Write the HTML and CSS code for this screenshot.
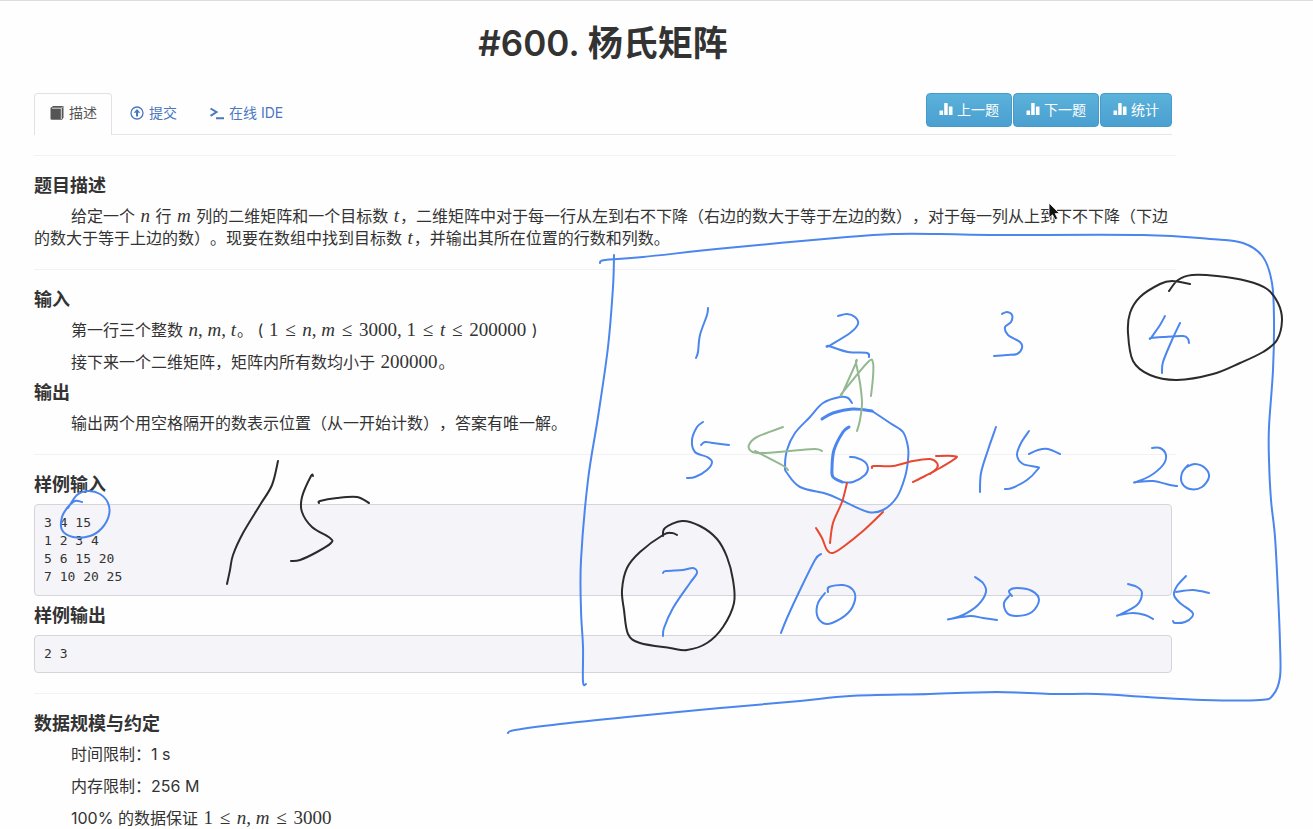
FILE: index.html
```
<!DOCTYPE html>
<html lang="zh-CN">
<head>
<meta charset="utf-8">
<title>#600. 杨氏矩阵</title>
<link rel="stylesheet" href="styles.css">
</head>
<body>
<svg class="symbols" aria-hidden="true">
  <symbol id="bars" viewBox="0 0 14 14"><path fill="currentColor" d="M1 8.500h2.600a.5.5 0 0 1 .5.5v4H.5V9a.5.5 0 0 1 .5-.5zM5.800 1h2.400a.5.5 0 0 1 .5.5V13H5.200V1.500a.5.5 0 0 1 .6-.5zM10.400 4.500H13a.5.5 0 0 1 .5.5v8H9.900V5a.5.5 0 0 1 .5-.5z"/></symbol>
</svg>
<main class="page">
  <h1 class="title">#600. 杨氏矩阵</h1>
  <div class="toolbar">
    <nav class="tabs">
      <a class="tab active" href="#desc"><svg class="icon" viewBox="0 0 14 14"><path fill="currentColor" d="M3 0h10.500v11.500l-1.500 2.300H1.800Q.5 13.800.5 12.500V2z"/><path fill="none" stroke="#fff" stroke-width=".8" d="M2 2.200h9.300V13M11.500 2.200l1.200-1.500"/></svg>描述</a>
      <a class="tab" href="#submit"><svg class="icon" viewBox="0 0 14 14"><circle cx="7" cy="7" r="6" fill="none" stroke="currentColor" stroke-width="1.300"/><path fill="currentColor" d="M7 3l3.300 3.700H8V10.500H6V6.700H3.700z"/></svg>提交</a>
      <a class="tab" href="#ide"><svg class="icon" viewBox="0 0 14 14"><path fill="none" stroke="currentColor" stroke-width="2" d="M.5 2.500L6.500 6 .5 9.800M6 12.300h8.500"/></svg>在线 IDE</a>
    </nav>
    <div class="actions">
      <button class="btn" type="button"><svg class="icon" viewBox="0 0 14 14"><use href="#bars"/></svg>上一题</button>
      <button class="btn" type="button"><svg class="icon" viewBox="0 0 14 14"><use href="#bars"/></svg>下一题</button>
      <button class="btn" type="button"><svg class="icon" viewBox="0 0 14 14"><use href="#bars"/></svg>统计</button>
    </div>
  </div>
  <hr class="rule">
  <section id="desc">
    <h2 class="heading">题目描述</h2>
    <p class="text">给定一个 <i class="math">n</i> 行 <i class="math">m</i> 列的二维矩阵和一个目标数 <i class="math">t</i>，二维矩阵中对于每一行从左到右不下降（右边的数大于等于左边的数），对于每一列从上到下不下降（下边的数大于等于上边的数）。现要在数组中找到目标数 <i class="math">t</i>，并输出其所在位置的行数和列数。</p>
  </section>
  <hr class="rule">
  <section>
    <h2 class="heading">输入</h2>
    <p class="text">第一行三个整数 <span class="math"><i>n</i>, <i>m</i>, <i>t</i></span>。 ( <span class="math">1 <b class="rel">≤</b> <i>n</i>, <i>m</i> <b class="rel">≤</b> 3000, 1 <b class="rel">≤</b> <i>t</i> <b class="rel">≤</b> 200000</span> )</p>
    <p class="text">接下来一个二维矩阵，矩阵内所有数均小于 <span class="math">200000</span>。</p>
    <h2 class="heading">输出</h2>
    <p class="text">输出两个用空格隔开的数表示位置（从一开始计数），答案有唯一解。</p>
  </section>
  <hr class="rule">
  <section>
    <h2 class="heading">样例输入</h2>
    <pre class="code">3 4 15
1 2 3 4
5 6 15 20
7 10 20 25</pre>
    <h2 class="heading">样例输出</h2>
    <pre class="code">2 3</pre>
  </section>
  <hr class="rule">
  <section>
    <h2 class="heading">数据规模与约定</h2>
    <p class="text">时间限制：1 s</p>
    <p class="text">内存限制：256 M</p>
    <p class="text">100% 的数据保证 <span class="math">1 <b class="rel">≤</b> <i>n</i>, <i>m</i> <b class="rel">≤</b> 3000</span></p>
  </section>
</main>
<svg class="ink" viewBox="0 0 1313 829" aria-hidden="true">
  <g id="strokes"></g>
  <path d="M1049 203v15l3.500-3.200 2.600 5 2.600-1.300-2.500-4.900h4.300z" fill="#111" stroke="#fff" stroke-width=".8"/>
</svg>
<script src="script.js"></script>
</body>
</html>
```
FILE: styles.css
```
body {
  margin: 0;
  position: relative;
  border-top: 1px solid #dcdce2;
  background: #fefefe;
  color: #333;
  font-family: Inter, "Noto Sans CJK SC", sans-serif;
  font-size: 16px;
  text-spacing-trim: space-all;
}
.symbols { display: none; }
.page { padding: 22px 141px 0 34px; }
.title {
  margin: 0 0 30px;
  font-size: 35px;
  line-height: 40px;
  font-weight: 600;
  text-align: center;
}
.toolbar {
  display: flex;
  justify-content: space-between;
  align-items: flex-start;
  border-bottom: 1px solid #e6e5ea;
  font-size: 14px;
}
.tabs { display: flex; gap: 2px; margin-bottom: -1px; }
.tab {
  display: flex;
  align-items: center;
  gap: 5px;
  padding: 9px 14px 12px 15px;
  border: 1px solid transparent;
  border-bottom: 0;
  line-height: 20px;
  color: #4a78c0;
  text-decoration: none;
}
.tab.active {
  color: #555;
  background: #fefefe;
  border-color: #e2e1e6;
  border-radius: 4px 4px 0 0;
}
.icon { width: 14px; height: 14px; flex: none; }
.actions { display: flex; gap: 1px; }
.btn {
  display: flex;
  align-items: center;
  gap: 4px;
  height: 34px;
  padding: 0 12px 2px;
  border: 1px solid #469cc8;
  border-radius: 4px;
  background: linear-gradient(#5bb2da, #4a9fd0);
  color: #fff;
  font: inherit;
}
.rule { margin: 20px -4px 20px 0; border: 0; border-top: 1px solid #f2f1f4; }
.heading { margin: 10px 0 9px; font-size: 18px; line-height: 20px; font-weight: 700; }
.text { margin: 0 0 10px; line-height: 22px; text-indent: 37px; }
.text:last-child { margin-bottom: 0; }
.math { margin: 0 1px; font-family: "Liberation Serif", serif; font-size: 19px; line-height: 1; }
.rel { font-weight: 400; margin: 0 2px; }
.code {
  margin: 0;
  padding: 9px;
  border: 1px solid #d5d4d8;
  border-radius: 4px;
  background: #f5f4f8;
  font-family: "DejaVu Sans Mono", monospace;
  font-size: 13px;
  line-height: 18px;
}
.ink {
  position: absolute;
  top: -1px;
  left: 0;
  width: 1313px;
  height: 829px;
  pointer-events: none;
}
.ink g path { fill: none; stroke-linecap: round; stroke-linejoin: round; }
.blue { stroke: #4a86ee; stroke-width: 2; }
.bold { stroke: #4a86ee; stroke-width: 3; }
.black { stroke: #2b2b2b; stroke-width: 2; }
.green { stroke: #94b892; stroke-width: 2; }
.red { stroke: #e8482f; stroke-width: 2; }
```
FILE: script.js
```
// Freehand strokes: [class, x, y, x, y, ...]; a repeated point makes a sharp corner.
const strokes = [
  // frame
  ["blue",600,263,605,260,643,257,727,248,847,237,893,234,940,234,990,235,1143,235,1210,239,1243,243,1263,257,1272,283,1274,320,1273,370,1269,427,1269,460,1271,500,1275,537,1278,593,1280,643,1280,677,1273,695,1260,700,1203,700,1147,697,1097,694,1050,694,997,692,930,694,850,696,800,701,720,708,627,717,560,724,515,730,508,733],
  ["blue",614,255,613,287,608,347,598,417,588,480,581,560,581,610,583,647,583,682,586,684],
  // first row
  ["blue",708,308,707,315,700,335,698,352,696,358],
  ["blue",838,316,847,314,855,317,858,324,850,333,829,346,829,346,848,352,867,353,869,357],
  ["blue",1002,314,1007,312,1012,315,1011,322,1005,327,1008,335,1020,342,1022,348,1017,354,1007,355,994,356],
  ["blue",1165,316,1160,325,1151,338,1151,338,1163,337,1183,336,1188,339,1189,343],
  ["blue",1180,323,1172,340,1163,362,1162,373],
  // second row
  ["blue",703,422,697,427,692,440,695,452,707,457,712,462,707,470,695,477,687,478],
  ["blue",701,445,705,442,713,443,729,445],
  ["blue",852,403,848,398,840,397,823,403,810,417,795,433,787,450,785,467,787,473,800,487,827,494,843,501,868,512,883,510,897,497,905,477,908,460,908,447,903,432,890,423,872,411],
  ["bold",872,411,853,409,833,413,822,419],
  ["bold",849,427,843,432,834,450,832,468,833,477,842,482],
  ["blue",842,482,853,482,865,475,868,468,865,462,857,458,850,457],
  ["blue",996,427,988,450,981,473,980,492],
  ["blue",1029,431,1021,443,1017,455,1023,464,1037,467,1038,469,1027,480,1012,488,1005,489],
  ["blue",1029,454,1038,450,1048,449,1060,454],
  ["blue",1152,448,1160,448,1166,455,1163,465,1150,476,1136,482,1136,482,1153,481,1170,485,1177,486],
  ["blue",1188,465,1182,473,1182,483,1190,489,1202,487,1209,477,1205,468,1195,464,1187,467],
  // third row
  ["blue",663,573,666,571,683,570,693,568,697,573,690,583,673,608,664,628,663,636],
  ["blue",821,554,815,560,800,590,787,618,781,633],
  ["blue",828,592,829,587,843,585,853,590,855,600,848,613,832,623,823,623,817,615,818,603,825,593],
  ["blue",975,577,983,583,986,592,978,605,963,615,950,619,950,619,970,616,983,618,997,620],
  ["blue",1012,596,1009,591,1017,588,1032,591,1039,600,1032,612,1017,616,1007,613,1004,603,1010,595],
  ["blue",1128,584,1137,587,1142,593,1137,605,1119,615,1119,615,1133,613,1145,615,1153,619],
  ["blue",1186,576,1177,586,1174,595,1180,603,1192,612,1192,617,1185,622,1175,623,1173,621],
  ["blue",1176,592,1193,590,1209,593],
  // circled sample input
  ["blue",68,508,77,495,88,491,100,494,108,503,109,515,102,528,90,536,73,537,62,530,62,517,68,507,75,501,82,502],
  // black strokes
  ["black",278,461,272,485,260,505,243,533,233,555,230,570,227,584],
  ["black",313,476,311,476,302,497,302,512,312,527,330,538,331,543,317,552,300,560,291,561],
  ["black",319,503,320,501,337,498,357,497,369,503],
  ["black",1169,291,1178,280,1192,275,1217,276,1247,281,1267,289,1278,303,1282,320,1277,340,1263,352,1240,363,1213,374,1177,380,1150,375,1133,361,1128,333,1130,313,1140,297,1160,284,1172,281,1190,284],
  ["black",663,536,665,528,682,521,700,526,717,539,727,557,733,580,734,603,723,627,707,643,687,650,670,648,640,643,628,634,624,610,622,590,627,568,640,552,663,535,672,533,677,535],
  // arrows
  ["green",857,431,860,420,862,403,860,383,856,363,856,363,843,392,843,392,868,362,873,363,873,377,871,396],
  ["green",822,451,815,449,790,451,760,453,751,451,749,445,757,437,783,427],
  ["green",755,451,782,465,788,470],
  ["red",872,468,874,466,893,466,913,461,930,459,937,463,937,468,930,474],
  ["red",936,456,953,456,956,458,940,468,925,476,913,482],
  ["red",847,483,842,502,833,523,830,543],
  ["red",816,528,822,538,827,550,833,553,843,547,863,531,883,512]
];

// Catmull-Rom spline through the points, written as cubic curves.
function toPath(v) {
  const p = [];
  for (let i = 0; i < v.length; i += 2) p.push([v[i], v[i + 1]]);
  let d = "M" + p[0];
  for (let i = 0; i < p.length - 1; i++) {
    const a = p[i - 1] || p[i], b = p[i], c = p[i + 1], e = p[i + 2] || c;
    const c1 = [b[0] + (c[0] - a[0]) / 6, b[1] + (c[1] - a[1]) / 6];
    const c2 = [c[0] - (e[0] - b[0]) / 6, c[1] - (e[1] - b[1]) / 6];
    d += "C" + c1 + " " + c2 + " " + c;
  }
  return d;
}

const layer = document.getElementById("strokes");
for (const [kind, ...points] of strokes) {
  const path = document.createElementNS("http://www.w3.org/2000/svg", "path");
  path.setAttribute("class", kind);
  path.setAttribute("d", toPath(points));
  layer.appendChild(path);
}
```
